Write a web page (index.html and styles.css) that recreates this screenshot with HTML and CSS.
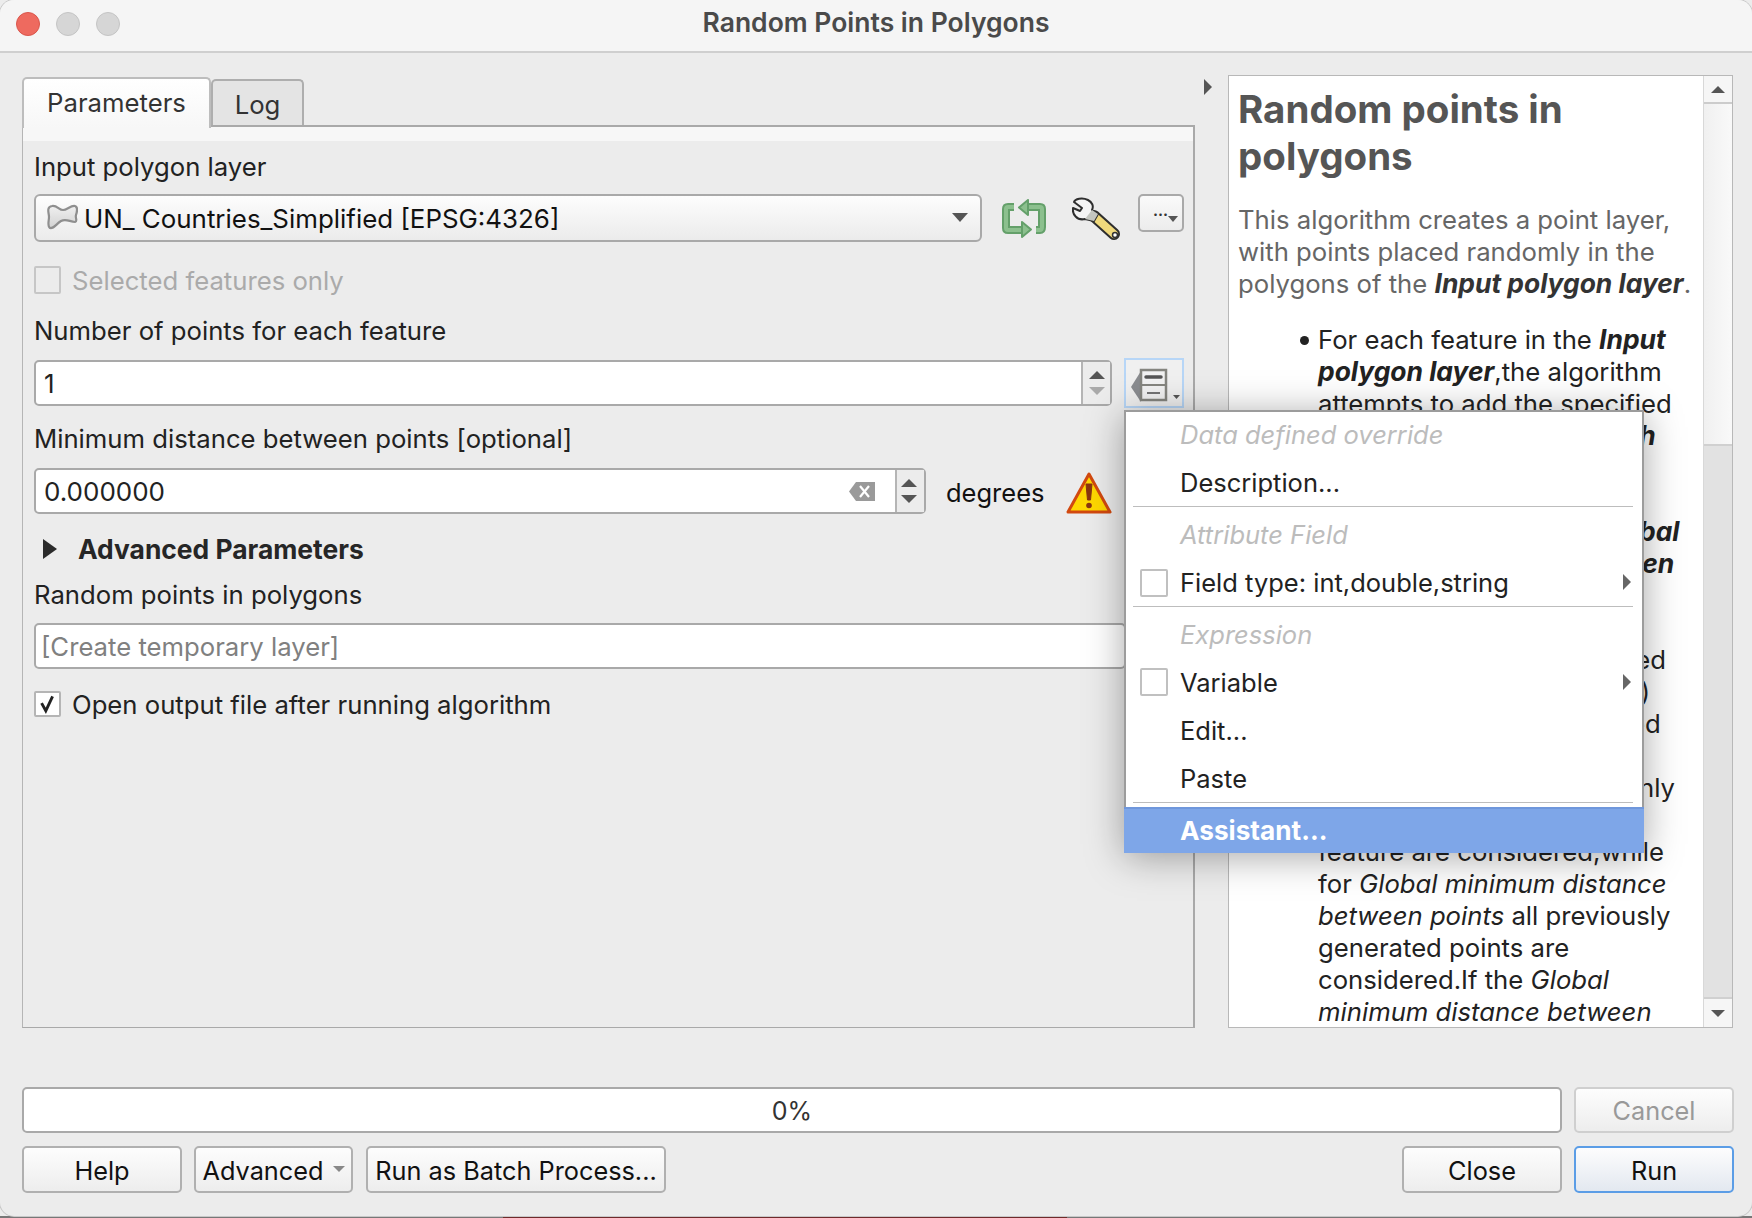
FILE: index.html
```html
<!DOCTYPE html>
<html lang="en">
<head>
<meta charset="utf-8">
<title>Random Points in Polygons</title>
<link rel="stylesheet" href="styles.css">
</head>
<body>
<div class="window">
  <header class="titlebar">
    <div class="lights"><span class="light red"></span><span class="light"></span><span class="light"></span></div>
    <div class="title">Random Points in Polygons</div>
  </header>
  <main class="main">
    <div class="columns">
      <section class="left">
        <div class="tabs">
          <div class="tab active">Parameters</div>
          <div class="tab">Log</div>
        </div>
        <div class="pane">
          <div class="strip"></div>
          <div class="form">
            <div class="label m10">Input polygon layer</div>
            <div class="row combo-row">
              <div class="combo">
                <svg class="layer-icon" viewBox="0 0 32 26"><defs><linearGradient id="blob" x1="0" y1="0" x2="0" y2="1"><stop offset="0" stop-color="#f0f0f0"/><stop offset="1" stop-color="#d2d2d2"/></linearGradient></defs><path d="M6 2C11 1 13 6 17 6S25 1 29 2C32 3 31 8 30 11C29 14 32 17 29 18C24 18 20 14 15 17S8 25 4 24C1 22 3 17 3 13S0 3 6 2Z" fill="url(#blob)" stroke="#8f8f8f" stroke-width="2.200"/></svg>
                <span class="combo-text">UN_ Countries_Simplified [EPSG:4326]</span>
                <svg class="combo-arrow" viewBox="0 0 16 9"><path d="M0 0H16L8 9Z" fill="#555"/></svg>
              </div>
              <svg class="refresh" viewBox="0 0 44 40">
                <g fill="none" stroke-linejoin="round">
                  <path d="M24 8H38Q40 8 40 10V28Q40 31 38 31H34M20 31H6Q4 31 4 29V10Q4 8 6 8H12" stroke="#64a06a" stroke-width="8"/>
                  <path d="M24 8H38Q40 8 40 10V28Q40 31 38 31H34M20 31H6Q4 31 4 29V10Q4 8 6 8H12" stroke="#8cc08e" stroke-width="4"/>
                </g>
                <path d="M26 1V16L17 8.500Z" fill="#8cc08e" stroke="#64a06a" stroke-width="2" stroke-linejoin="round"/>
                <path d="M20 23V38L29 30.500Z" fill="#8cc08e" stroke="#64a06a" stroke-width="2" stroke-linejoin="round"/>
              </svg>
              <svg class="wrench" viewBox="0 0 48 46">
                <path d="M22 19L42 37" stroke="#2e2e2e" stroke-width="12" stroke-linecap="round"/>
                <path d="M23 20L42 37" stroke="#f0d97c" stroke-width="8" stroke-linecap="round"/>
                <circle cx="43" cy="38" r="2.500" fill="#fff" stroke="#333" stroke-width="1.500"/>
                <path d="M16 3C10 0 3 2 2 5L10 11L8 14L1 11C0 17 5 24 13 22L22 24L26 17L20 13C22 9 20 5 16 3Z" fill="#f4f4f4" stroke="#2e2e2e" stroke-width="2" stroke-linejoin="round"/>
                <path d="M13 22L22 24L26 17L20 13Z" fill="#c4c6c0"/>
              </svg>
              <div class="dots-btn"><span class="dots">...</span><svg class="dots-arrow" viewBox="0 0 10 6"><path d="M0 0H10L5 6Z" fill="#555"/></svg></div>
            </div>
            <div class="check-row disabled m24">
              <span class="checkbox"></span><span class="nudge">Selected features only</span>
            </div>
            <div class="label m21">Number of points for each feature</div>
            <div class="row spin-row">
              <div class="field spin-wide">
                <span class="value">1</span>
                <div class="stepper">
                  <svg viewBox="0 0 16 8"><path d="M0 8H16L8 0Z" fill="#555"/></svg>
                  <svg viewBox="0 0 16 8"><path d="M0 0H16L8 8Z" fill="#aaa"/></svg>
                </div>
              </div>
              <div class="dd-btn">
                <svg viewBox="0 0 55 46" class="dd-icon">
                  <path d="M14 3V34L4 19Z" fill="#8a8c90"/>
                  <rect x="14" y="2" width="25" height="30" fill="#f2f2f2" stroke="#85857f" stroke-width="2.500"/>
                  <path d="M14 17H39" stroke="#85857f" stroke-width="2"/>
                  <path d="M19 9H34" stroke="#555" stroke-width="3.500" stroke-linecap="round"/>
                  <path d="M20 25H33" stroke="#666" stroke-width="1.800"/>
                  <path d="M46 27H53L49.500 31Z" fill="#555"/>
                </svg>
              </div>
            </div>
            <div class="label m15">Minimum distance between points [optional]</div>
            <div class="row dist-row">
              <div class="field dist-field">
                <span class="value">0.000000</span>
                <svg class="clear" viewBox="0 0 26 19"><path d="M7 0H26V19H7L0 9.500Z" fill="#9a9a9a"/><path d="M11 4L20 15M20 4L11 15" stroke="#fff" stroke-width="2.200"/></svg>
                <div class="stepper">
                  <svg viewBox="0 0 16 8"><path d="M0 8H16L8 0Z" fill="#555"/></svg>
                  <svg viewBox="0 0 16 8"><path d="M0 0H16L8 8Z" fill="#555"/></svg>
                </div>
              </div>
              <span class="unit">degrees</span>
              <svg class="warn" viewBox="0 0 46 42">
                <path d="M23 2L44 40H2Z" fill="#ffd800" stroke="#d2490f" stroke-width="3" stroke-linejoin="round"/>
                <path d="M20 12H26L24.500 28H21.500Z" fill="#8a3510" stroke="#8a3510" stroke-linejoin="round"/>
                <circle cx="23" cy="33.500" r="2.800" fill="#8a3510"/>
              </svg>
            </div>
            <div class="advanced m19">
              <svg class="adv-arrow" viewBox="0 0 14 20"><path d="M0 0L14 10L0 20Z" fill="#2b2b2b"/></svg>
              <span>Advanced Parameters</span>
            </div>
            <div class="label m14">Random points in polygons</div>
            <div class="field output m12"><span class="placeholder">[Create temporary layer]</span></div>
            <div class="check-row m22 short">
              <span class="checkbox on"><svg viewBox="0 0 26 26"><path d="M6 12L11 21L19 4" fill="none" stroke="#222" stroke-width="3.400"/></svg></span>
              <span>Open output file after running algorithm</span>
            </div>
          </div>
        </div>
      </section>
      <svg class="collapse" viewBox="0 0 8 16"><path d="M0 0L8 8L0 16Z" fill="#555"/></svg>
      <aside class="help">
        <div class="help-text">
          <h1>Random points in<br>polygons</h1>
          <p class="intro">This algorithm creates a point layer,<br>with points placed randomly in the<br>polygons of the <b><i>Input polygon layer</i></b>.</p>
          <ul>
            <li>For each feature in the <b><i>Input<br>polygon layer</i></b>,the algorithm<br>attempts to add the specified<br><b><i>Number of points for each</i></b><br>feature to the output layer.</li>
            <li><b><i>Minimum distance</i></b> or <b><i>Global<br>minimum distance between</i></b><br>points can be set.</li>
            <li>A point will not be generated<br>if another point (in any line)<br>it's closer than the specified<br>distance.<br>With <i>Minimum distances</i> only<br>points from the same<br>feature are considered,while<br>for <i>Global minimum distance<br>between points</i> all previously<br>generated points are<br>considered.If the <i>Global<br>minimum distance between</i></li>
          </ul>
        </div>
        <div class="scrollbar">
          <div class="sb-btn top"><svg viewBox="0 0 16 8"><path d="M0 8H16L8 0Z" fill="#555"/></svg></div>
          <div class="sb-thumb"></div>
          <div class="sb-track"></div>
          <div class="sb-btn"><svg viewBox="0 0 16 8"><path d="M0 0H16L8 8Z" fill="#555"/></svg></div>
        </div>
      </aside>
    </div>
    <div class="progress-row">
      <div class="progress">0%</div>
      <div class="btn cancel">Cancel</div>
    </div>
    <div class="button-row">
      <div class="btn help-btn">Help</div>
      <div class="btn adv-btn">Advanced<svg viewBox="0 0 12 6"><path d="M0 0H12L6 6Z" fill="#888"/></svg></div>
      <div class="btn batch-btn">Run as Batch Process...</div>
      <div class="spacer"></div>
      <div class="btn close-btn">Close</div>
      <div class="btn run-btn">Run</div>
    </div>
  </main>
</div>
<nav class="popup">
  <div class="item head first">Data defined override</div>
  <div class="item desc">Description...</div>
  <div class="sep"></div>
  <div class="item head up">Attribute Field</div>
  <div class="item short check"><span class="checkbox menu-box"></span>Field type: int,double,string<svg class="sub" viewBox="0 0 8 16"><path d="M0 0L8 8L0 16Z" fill="#666"/></svg></div>
  <div class="sep"></div>
  <div class="item head up">Expression</div>
  <div class="item check up"><span class="checkbox menu-box"></span>Variable<svg class="sub" viewBox="0 0 8 16"><path d="M0 0L8 8L0 16Z" fill="#666"/></svg></div>
  <div class="item up">Edit...</div>
  <div class="item short">Paste</div>
  <div class="sep"></div>
  <div class="item selected">Assistant...</div>
</nav>
</body>
</html>
```

FILE: styles.css
```css
* { box-sizing: border-box; }
html, body { margin: 0; padding: 0; }
body {
  width: 1752px;
  height: 1218px;
  overflow: hidden;
  position: relative;
  font-family: Inter, "Noto Sans", "Liberation Sans", sans-serif;
  font-size: 25.7px;
  color: #222;
  background:
    linear-gradient(to right, #777 0 503px, #6e2a2a 503px 1067px, #777 1067px) bottom / 100% 2px no-repeat,
    #ececec;
}
b { font-size: 26.4px; line-height: 1; }
.window {
  height: 1216px;
  background: #ececec;
  border-radius: 14px;
  box-shadow: 0 0 0 1px #c8c8c8;
  overflow: hidden;
}
.titlebar {
  height: 53px;
  background: #f5f5f5;
  border-bottom: 2px solid #cfcfcf;
  display: flex;
  align-items: center;
  position: relative;
  justify-content: center;
}
.lights { position: absolute; left: 16px; top: 12px; display: flex; gap: 16px; }
.light { width: 24px; height: 24px; border-radius: 50%; background: #d6d6d6; border: 1px solid #c4c4c4; }
.light.red { background: #ee6a5f; border-color: #d9564c; }
.title { font-size: 26.5px; font-weight: 600; color: #4a4a4a; margin-top: -8px; }
.main { padding: 22px 18px 0 22px; }
.columns { display: flex; height: 953px; }
.left { width: 1173px; display: flex; flex-direction: column; }
.tabs { height: 51px; display: flex; align-items: flex-end; margin-bottom: -1px; }
.tab {
  height: 47px;
  width: 93px;
  background: #e4e4e4;
  border: 2px solid #aeaeae;
  border-bottom: 0;
  border-radius: 5px 5px 0 0;
  display: flex;
  align-items: center;
  justify-content: center;
  font-size: 25.7px;
  color: #333;
  padding-top: 2px;
}
.tab.active {
  height: 51px;
  width: 189px;
  background: linear-gradient(#ffffff, #f7f7f7);
  border-color: #bdbdbd;
  padding-top: 0;
  position: relative;
  z-index: 2;
  margin-bottom: -2px;
  padding-bottom: 2px;
}
.pane {
  flex: 1;
  border: 2px solid #a9a9a9;
  border-bottom-width: 1px;
  border-left-width: 1px;
  border-left-color: #b5b5b5;
  position: relative;
}
.strip { height: 14px; background: #f7f7f7; }
.form { padding-left: 11px; }
.label { height: 32px; line-height: 32px; white-space: nowrap; }
.m10 { margin-top: 10px; }
.m12 { margin-top: 12px; }
.m14 { margin-top: 14px; }
.m15 { margin-top: 15px; }
.m19 { margin-top: 19px; }
.m21 { margin-top: 21px; }
.m22 { margin-top: 22px; }
.m24 { margin-top: 24px; }
.row { display: flex; }
.combo-row { margin-top: 11px; height: 48px; }
.combo {
  width: 948px;
  height: 48px;
  border: 2px solid #a9a9a9;
  border-radius: 6px;
  background: linear-gradient(#fdfdfd, #ebebeb);
  display: flex;
  align-items: center;
  padding-left: 10px;
}
.layer-icon { width: 32px; height: 26px; margin-top: -3px; }
.combo-text { margin-left: 6px; color: #111; white-space: nowrap; font-size: 25.9px; }
.combo-arrow { width: 16px; height: 9px; margin-left: auto; margin-right: 12px; margin-top: -2px; }
.refresh { width: 44px; height: 40px; margin: 5px 0 0 20px; }
.wrench { width: 48px; height: 46px; margin: 3px 0 0 26px; }
.dots-btn {
  width: 46px;
  height: 38px;
  margin-left: 18px;
  border: 2px solid #a9a9a9;
  border-radius: 5px;
  background: linear-gradient(#fafafa, #ececec);
  position: relative;
}
.dots { position: absolute; left: 13px; top: 5px; font-size: 15px; line-height: 20px; color: #333; font-weight: 700; }
.dots-arrow { position: absolute; right: 4px; top: 20px; width: 10px; height: 6px; }
.check-row { display: flex; align-items: center; height: 28px; white-space: nowrap; }
.check-row.short { height: 26px; }
.check-row.disabled { color: #aaa; }
.nudge { padding-top: 1px; }
.checkbox {
  width: 27px;
  height: 28px;
  border: 2px solid #bbb;
  border-radius: 2px;
  background: #f2f2f2;
  margin-right: 11px;
  flex: none;
}
.disabled .checkbox { background: #ececec; border-color: #c6c6c6; }
.checkbox.on { height: 26px; background: #fff; border-color: #b5b5b5; }
.checkbox.on svg { display: block; width: 100%; height: 100%; }
.spin-row { margin-top: 11px; height: 50px; align-items: center; }
.field {
  height: 46px;
  border: 2px solid #a9a9a9;
  border-radius: 5px;
  background: #fff;
  display: flex;
  align-items: center;
  position: relative;
}
.spin-wide { width: 1078px; }
.value { margin-left: 8px; color: #222; font-size: 26px; padding-top: 1px; }
.stepper {
  margin-left: auto;
  width: 29px;
  height: 42px;
  border-left: 2px solid #b5b5b5;
  background: #ececec;
  display: flex;
  flex-direction: column;
  align-items: center;
  justify-content: center;
  gap: 8px;
}
.stepper svg { width: 16px; height: 8px; display: block; }
.dd-btn {
  width: 60px;
  height: 50px;
  margin-left: 12px;
  border: 2px solid #b7d6f7;
  background: #f0f0f0;
  position: relative;
}
.dd-icon { position: absolute; left: 1px; top: 8px; width: 55px; height: 46px; overflow: visible; }
.dist-row { margin-top: 13px; height: 46px; align-items: center; }
.dist-field { width: 892px; }
.clear { width: 26px; height: 19px; margin-left: auto; margin-right: 20px; }
.dist-field .stepper { margin-left: 0; padding-right: 3px; }
.unit { margin-left: 20px; color: #111; padding-top: 2px; font-size: 25.5px; }
.warn { width: 46px; height: 42px; margin-left: 21px; margin-top: 3px; }
.advanced { display: flex; align-items: center; height: 32px; font-weight: 700; font-size: 26.4px; color: #262626; white-space: nowrap; }
.adv-arrow { width: 14px; height: 20px; margin: 0 21px 0 9px; }
.output { width: 1092px; }
.placeholder { margin-left: 5px; color: #808080; }
.collapse { width: 8px; height: 16px; margin: 4px 16px 0 9px; flex: none; }
.help {
  width: 505px;
  border: 1px solid #b8b8b8;
  background: #fff;
  display: flex;
  overflow: hidden;
}
.help-text { flex: 1; padding: 0 0 0 9px; overflow: hidden; white-space: nowrap; min-width: 0; }
.help-text h1 { margin: 10px 0 0; font-size: 38.5px; line-height: 47px; font-weight: 700; color: #555; }
.intro { margin: 24px 0 0; line-height: 32px; color: #666; }
.intro b { color: #333; }
ul { margin: 0; padding: 0 0 0 80px; list-style: none; }
li { line-height: 32px; color: #222; margin-top: 24px; position: relative; }
li + li { margin-top: 32px; }
li:first-child::before { content: ""; position: absolute; left: -18px; top: 12px; width: 9px; height: 9px; border-radius: 50%; background: #222; }
.scrollbar { width: 29px; display: flex; flex-direction: column; flex: none; border-left: 1px solid #d8d8d8; }
.sb-btn { height: 28px; background: #f6f6f6; display: flex; align-items: center; justify-content: center; }
.sb-btn.top { border-bottom: 2px solid #ccc; }
.sb-btn svg { width: 14px; height: 7px; }
.sb-thumb { height: 340px; background: linear-gradient(to right, #f0f0f0, #f9f9f9); }
.sb-track { flex: 1; background: #e2e2e2; border-top: 2px solid #d0d0d0; border-bottom: 2px solid #d0d0d0; }
.progress-row { margin-top: 59px; display: flex; gap: 12px; height: 46px; }
.progress {
  width: 1540px;
  height: 46px;
  border: 2px solid #a9a9a9;
  border-radius: 5px;
  background: #fff;
  display: flex;
  align-items: center;
  justify-content: center;
  color: #333;
  font-size: 25px;
  padding-top: 1px;
}
.btn {
  height: 47px;
  border: 2px solid #b0b0b0;
  border-radius: 5px;
  background: linear-gradient(#fdfdfd, #ededed);
  display: flex;
  align-items: center;
  justify-content: center;
  color: #111;
  white-space: nowrap;
  font-size: 25.3px;
  padding-top: 2px;
}
.cancel { width: 160px; height: 46px; color: #999; border-color: #cfcfcf; padding-top: 1px; }
.button-row { margin-top: 13px; display: flex; height: 47px; }
.help-btn { width: 160px; }
.adv-btn { width: 159px; margin-left: 12px; gap: 9px; }
.adv-btn svg { width: 12px; height: 6px; margin-top: -3px; }
.batch-btn { width: 300px; margin-left: 13px; }
.spacer { flex: 1; }
.close-btn { width: 160px; }
.run-btn { width: 160px; margin-left: 12px; border-color: #5b9de6; background: linear-gradient(#fdfdfd, #e3e8f0); }
.popup {
  position: absolute;
  left: 1124px;
  top: 410px;
  width: 520px;
  height: 443px;
  background: #fff;
  border: 2px solid #9c9c9c;
  box-shadow: 0 4px 36px rgba(0, 0, 0, 0.35);
  color: #222;
  font-size: 25.5px;
}
.item { height: 48px; display: flex; align-items: center; padding-left: 54px; position: relative; white-space: nowrap; }
.item.first { height: 47px; padding-bottom: 3px; }
.item.desc { height: 47px; padding-bottom: 1px; }
.item.up { padding-bottom: 2px; }
.item.short { height: 47px; }
.item.head { color: #bcbcbc; font-style: italic; }
.item.check { padding-left: 14px; }
.menu-box { width: 28px; height: 28px; background: #fff; border-color: #c0c0c0; margin-right: 12px; }
.sub { position: absolute; right: 11px; top: 15px; width: 8px; height: 16px; }
.sep { height: 1px; margin: 0 9px 4px 7px; background: #bdbdbd; }
.item.selected { height: 46px; background: #7ea6e8; color: #fff; font-weight: 700; font-size: 26.2px; margin: 0 -2px -2px; padding: 0 0 2px 56px; border-top: 2px solid #6f97dc; }
```
